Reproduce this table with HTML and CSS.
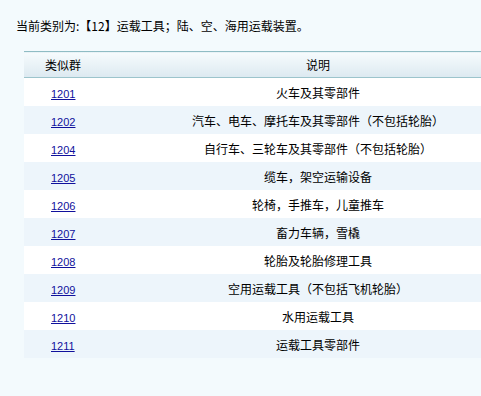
FILE: index.html
```html
<!DOCTYPE html>
<html lang="zh">
<head>
<meta charset="utf-8">
<link rel="stylesheet" href="styles.css">
</head>
<body>
<div class="page">
  <p class="title">当前类别为:【12】运载工具；陆、空、海用运载装置。</p>
  <table class="grid">
    <thead>
      <tr><th class="c1">类似群</th><th class="c2">说明</th></tr>
    </thead>
    <tbody>
      <tr><td class="c1"><a href="#">1201</a></td><td class="c2">火车及其零部件</td></tr>
      <tr class="alt"><td class="c1"><a href="#">1202</a></td><td class="c2">汽车、电车、摩托车及其零部件（不包括轮胎）</td></tr>
      <tr><td class="c1"><a href="#">1204</a></td><td class="c2">自行车、三轮车及其零部件（不包括轮胎）</td></tr>
      <tr class="alt"><td class="c1"><a href="#">1205</a></td><td class="c2">缆车，架空运输设备</td></tr>
      <tr><td class="c1"><a href="#">1206</a></td><td class="c2">轮椅，手推车，儿童推车</td></tr>
      <tr class="alt"><td class="c1"><a href="#">1207</a></td><td class="c2">畜力车辆，雪橇</td></tr>
      <tr><td class="c1"><a href="#">1208</a></td><td class="c2">轮胎及轮胎修理工具</td></tr>
      <tr class="alt"><td class="c1"><a href="#">1209</a></td><td class="c2">空用运载工具（不包括飞机轮胎）</td></tr>
      <tr><td class="c1"><a href="#">1210</a></td><td class="c2">水用运载工具</td></tr>
      <tr class="alt"><td class="c1"><a href="#">1211</a></td><td class="c2">运载工具零部件</td></tr>
    </tbody>
  </table>
</div>
</body>
</html>
```

FILE: styles.css
```css
html, body {
  margin: 0;
  padding: 0;
  overflow: hidden;
  background: #f3fafd;
}
body {
  font-family: "Noto Sans CJK SC", "DejaVu Sans", sans-serif;
  font-size: 12px;
  color: #000;
}
.page {
  width: 481px;
  height: 396px;
  overflow: hidden;
  padding: 16px 0 0 16px;
  box-sizing: border-box;
}
.title {
  margin: 0;
  line-height: 20px;
  height: 20px;
}
.grid {
  margin: 15px 0 0 8px;
  border-collapse: collapse;
  table-layout: fixed;
  width: 511px;
}
.grid th {
  font-weight: normal;
  height: 25px;
  padding: 0;
  border-top: 1px solid #8fbcc4;
  border-bottom: 1px solid #9cc4cc;
  background: linear-gradient(#f6fbfd, #dce9f0);
  text-align: center;
}
.grid td {
  height: 28px;
  padding: 0;
  text-align: center;
  background: #ffffff;
}
.grid tr.alt td {
  background: #edf5fb;
}
.c1 { width: 77px; }
.grid td.c1 { text-align: left; padding-left: 27px; box-sizing: border-box; }
.grid th.c1 { text-align: left; padding-left: 21px; box-sizing: border-box; }
a {
  color: #10109c;
  text-decoration: underline;
  font-family: "Liberation Sans", sans-serif;
  font-size: 11px;
}
```
